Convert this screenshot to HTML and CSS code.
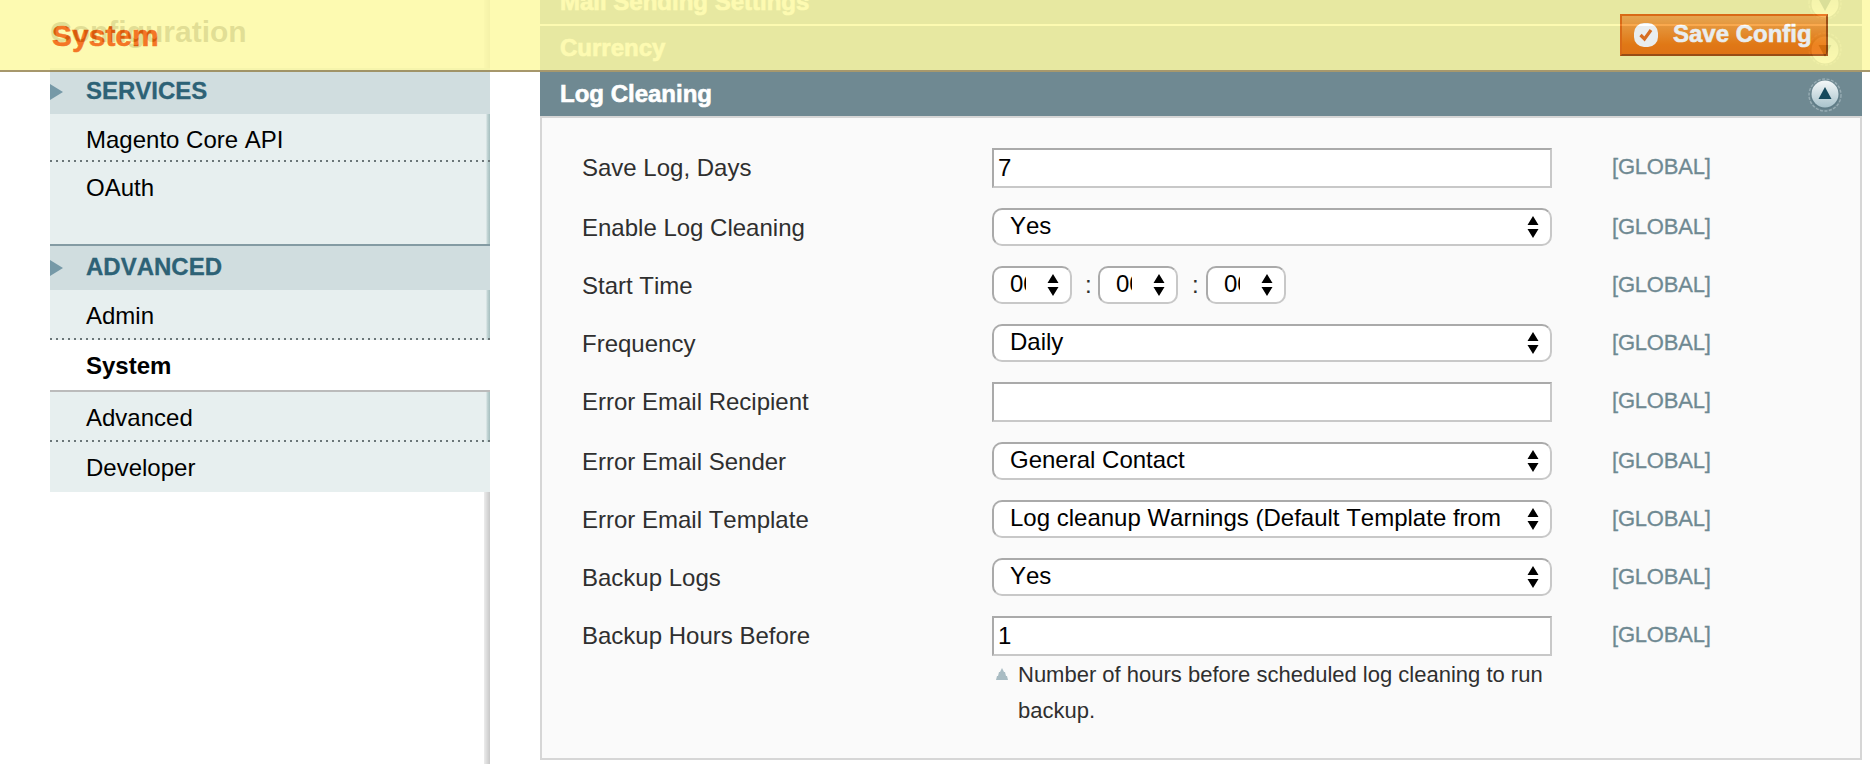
FILE: index.html
```html
<!DOCTYPE html>
<html lang="en">
<head>
<meta charset="utf-8">
<title>Configuration</title>
<link rel="stylesheet" href="styles.css">
</head>
<body>
<svg class="defs" aria-hidden="true">
  <defs>
    <linearGradient id="knob" x1="0" y1="0" x2="0" y2="1">
      <stop offset="0" stop-color="#f4f8f9"/><stop offset="1" stop-color="#a9c3cc"/>
    </linearGradient>
    <symbol id="updown" viewBox="0 0 12 22"><path d="M6 0l5.5 9H.5zM6 22l5.5-9H.5z"/></symbol>
    <symbol id="toggle" viewBox="0 0 34 34">
      <circle cx="17" cy="17" r="16" fill="none" stroke="#a9bcc3" stroke-width="1.4" stroke-dasharray="3 1.5" opacity=".7"/>
      <circle cx="17" cy="17" r="14.5" fill="#5f7c87"/>
      <circle cx="17" cy="16" r="13.5" fill="url(#knob)"/>
      <path d="M17 9l6.5 12h-13z" fill="#16495c"/>
    </symbol>
  </defs>
</svg>
<header class="floating">
  <h3 class="floating-title">System</h3>
  <button class="save">
    <svg class="save-icon" viewBox="0 0 24 24"><rect width="24" height="24" rx="10" fill="#fff"/><path d="M6.5 12l4 4 6.5-9" fill="none" stroke="#ea6a10" stroke-width="3.2"/></svg>
    <span>Save Config</span>
  </button>
</header>
<div class="page">
  <aside class="sidebar">
    <h3 class="side-title">Configuration</h3>
    <section class="group group-services">
      <h4 class="group-head">SERVICES</h4>
      <a class="item item-first">Magento Core API</a>
      <a class="item item-last">OAuth</a>
    </section>
    <section class="group">
      <h4 class="group-head">ADVANCED</h4>
      <a class="item">Admin</a>
      <a class="item item-active">System</a>
      <a class="item">Advanced</a>
      <a class="item item-end">Developer</a>
    </section>
  </aside>
  <main class="main">
    <div class="bar bar-cut"><span>Mail Sending Settings</span><svg class="toggle toggle-down"><use href="#toggle"/></svg></div>
    <div class="bar"><span>Currency</span><svg class="toggle toggle-down"><use href="#toggle"/></svg></div>
    <div class="bar bar-open"><span>Log Cleaning</span><svg class="toggle"><use href="#toggle"/></svg></div>
    <div class="panel">
      <div class="row"><span class="label">Save Log, Days</span><div class="control"><div class="input">7</div></div><span class="scope">[GLOBAL]</span></div>
      <div class="row"><span class="label">Enable Log Cleaning</span><div class="control"><div class="select"><span>Yes</span><svg class="updown"><use href="#updown"/></svg></div></div><span class="scope">[GLOBAL]</span></div>
      <div class="row"><span class="label">Start Time</span><div class="control times">
        <div class="select time"><span>00</span><svg class="updown"><use href="#updown"/></svg></div><span class="colon">:</span>
        <div class="select time"><span>00</span><svg class="updown"><use href="#updown"/></svg></div><span class="colon colon-wide">:</span>
        <div class="select time"><span>00</span><svg class="updown"><use href="#updown"/></svg></div></div><span class="scope">[GLOBAL]</span></div>
      <div class="row"><span class="label">Frequency</span><div class="control"><div class="select"><span>Daily</span><svg class="updown"><use href="#updown"/></svg></div></div><span class="scope">[GLOBAL]</span></div>
      <div class="row"><span class="label">Error Email Recipient</span><div class="control"><div class="input"></div></div><span class="scope">[GLOBAL]</span></div>
      <div class="row"><span class="label">Error Email Sender</span><div class="control"><div class="select"><span>General Contact</span><svg class="updown"><use href="#updown"/></svg></div></div><span class="scope">[GLOBAL]</span></div>
      <div class="row"><span class="label">Error Email Template</span><div class="control"><div class="select"><span>Log cleanup Warnings (Default Template from</span><svg class="updown"><use href="#updown"/></svg></div></div><span class="scope">[GLOBAL]</span></div>
      <div class="row"><span class="label">Backup Logs</span><div class="control"><div class="select"><span>Yes</span><svg class="updown"><use href="#updown"/></svg></div></div><span class="scope">[GLOBAL]</span></div>
      <div class="row"><span class="label">Backup Hours Before</span><div class="control"><div class="input">1</div>
        <p class="note"><svg class="note-icon" viewBox="0 0 14 12"><path d="M7 0l2 4h1l1 4h1l1 4H1l1-4h1l1-4h1z" fill="#a9bcc3"/></svg><span>Number of hours before scheduled log cleaning to run backup.</span></p></div><span class="scope">[GLOBAL]</span></div>
    </div>
  </main>
</div>
</body>
</html>
```
FILE: styles.css
```css
* { box-sizing: border-box; }
body {
  margin: 0;
  height: 764px;
  overflow: hidden;
  background: #fff;
  color: #2f2f2f;
  font: 24px/28px "Liberation Sans", Arial, sans-serif;
  font-kerning: none;
}
h3, h4, p { margin: 0; }
.defs { position: absolute; width: 0; height: 0; }

/* Translucent bar fixed over the page */
.floating {
  position: fixed;
  inset: 0 0 auto 0;
  z-index: 2;
  height: 72px;
  padding: 14px 42px 0 52px;
  display: flex;
  justify-content: space-between;
  align-items: flex-start;
  background: #fdfaa4;
  border-bottom: 2px solid #988753;
  opacity: .85;
}
.floating-title { font-size: 30px; line-height: 34px; margin-top: 5px; color: #f25f00; -webkit-text-stroke: .5px; }
.save {
  width: 208px;
  height: 42px;
  padding: 0 0 2px 12px;
  display: flex;
  align-items: center;
  gap: 15px;
  border: 2px solid;
  border-color: #ed6502 #a04300 #a04300 #ed6502;
  background: linear-gradient(#fcab45, #f57600 75%, #f37000);
  color: #fff;
  font: bold 24px/28px "Liberation Sans", Arial, sans-serif;
  white-space: nowrap;
  -webkit-text-stroke: .6px;
}
.save-icon { width: 24px; height: 24px; flex: none; margin-top: 1px; }

.page { display: flex; height: 764px; padding: 0 8px 0 50px; gap: 50px; }

/* Section navigation */
.sidebar {
  width: 440px;
  flex: none;
  background: linear-gradient(to right, #fff 434px, #ececec 434px, #c8c8c8 440px);
}
.side-title { height: 68px; padding-top: 15px; font-size: 30px; line-height: 34px; color: #444; }
.group-head {
  position: relative;
  height: 46px;
  padding: 8px 36px 0;
  border-top: 2px solid #849ba3;
  background: #d0dddf;
  color: #2d6276;
  font-size: 24px;
  line-height: 26px;
  -webkit-text-stroke: .3px;
}
.group-services .group-head { border-top-color: #d0dddf; }
.group-head::before {
  content: "";
  position: absolute;
  left: 0;
  top: 14px;
  border: 8px solid transparent;
  border-left: 13px solid #7699a7;
  border-right: 0;
}
.item {
  display: block;
  height: 50px;
  padding: 12px 36px 0;
  background:
    repeating-linear-gradient(to right, #6b7678 0 2px, transparent 2px 6px) left bottom / 100% 2px no-repeat,
    linear-gradient(to right, #e7efef 436px, #c7d8d8 437px, #a5bebe 440px);
  color: #000;
}
.item-first { height: 48px; }
.item-last { height: 82px; background: linear-gradient(to right, #e7efef 436px, #c7d8d8 437px, #a5bebe 440px); }
.item-active { height: 52px; background: #fff; border-bottom: 2px solid #bbb; font-weight: bold; }
.item-end { height: 50px; background: #e7efef; }

/* Collapsible section bars */
.main { flex: 1; }
.bar {
  height: 46px;
  padding: 0 20px;
  display: flex;
  align-items: center;
  justify-content: space-between;
  border-bottom: 2px solid #fff;
  background: #6f8992;
  color: #fff;
  font-weight: bold;
  -webkit-text-stroke: .6px;
}
.bar-cut { margin-top: -20px; }
.bar-open { height: 44px; border-bottom: 0; }
.toggle { width: 34px; height: 34px; margin-top: 2px; }
.toggle-down { transform: rotate(180deg); }

.panel {
  height: 644px;
  padding-top: 20px;
  border: 2px solid #d6d6d6;
  background: #fafafa;
}
.row {
  display: grid;
  grid-template-columns: 410px 560px 1fr;
  padding: 10px 0 10px 40px;
}
.label { margin-top: 6px; height: 28px; }
.scope { margin: 5px 0 0 60px; height: 28px; color: #6f8992; font-size: 22px; letter-spacing: -.2px; -webkit-text-stroke: .3px; }
.input {
  height: 40px;
  padding: 4px;
  border: 2px solid;
  border-color: #aaa #c8c8c8 #c8c8c8 #aaa;
  background: #fff;
  color: #000;
}
.select {
  height: 38px;
  padding: 2px 11px 0 16px;
  display: flex;
  justify-content: space-between;
  border: 2px solid;
  border-color: #aaa #c8c8c8 #c8c8c8 #aaa;
  border-radius: 10px;
  background: #fff;
  color: #000;
  white-space: nowrap;
}
.updown { width: 12px; height: 22px; margin-top: 4px; flex: none; }
.times { display: flex; }
.time { width: 80px; }
.time span { width: 16px; overflow: hidden; }
.colon { width: 26px; padding: 5px 0 0 13px; }
.colon-wide { width: 28px; padding-left: 14px; }
.note { display: flex; margin-top: 1px; padding-left: 3px; font-size: 22px; line-height: 36px; }
.note-icon { width: 14px; height: 12px; margin: 11px 9px 0 0; flex: none; }
```
